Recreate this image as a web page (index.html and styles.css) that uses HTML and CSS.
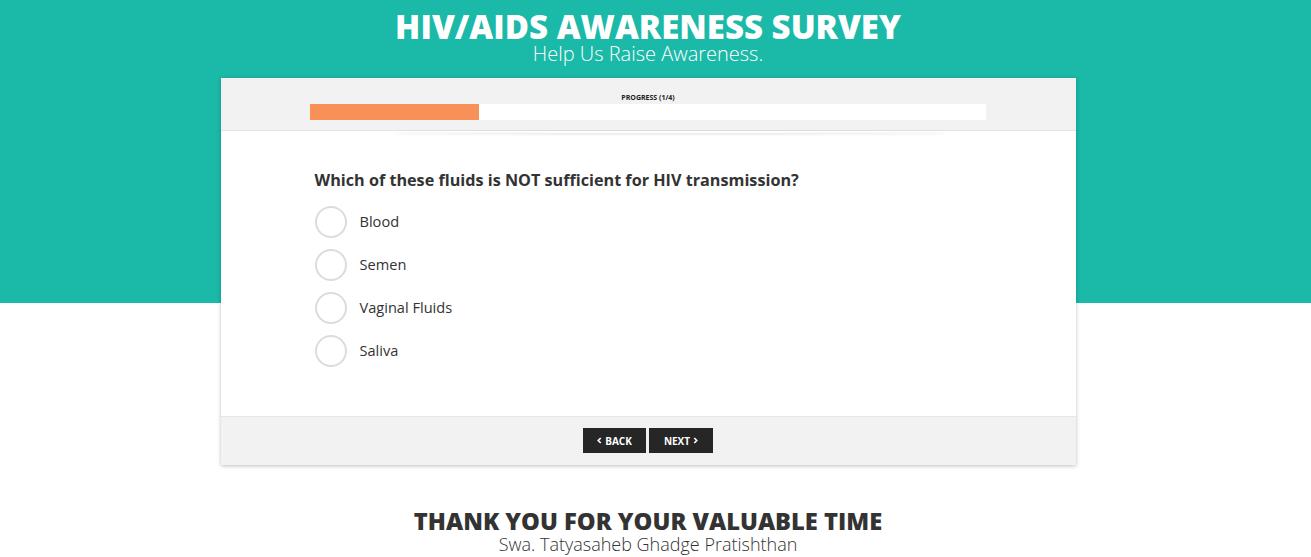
FILE: index.html
```html
<!DOCTYPE html>
<html lang="en">
<head>
    <meta charset="UTF-8">
    <meta name="viewport" content="width=device-width, initial-scale=1.0">
    <title>HIV/AIDS Awareness Survey</title>
    <link rel="stylesheet" href="styles.css">
</head>
<body>
    <header class="page-header">
        <h1 class="title">HIV/AIDS AWARENESS SURVEY</h1>
        <p class="subtitle">Help Us Raise Awareness.</p>
    </header>

    <main class="survey-card">
        <div class="progress-area">
            <div class="progress-label">PROGRESS (1/4)</div>
            <div class="progress-track">
                <div class="progress-fill" style="width: 25%"></div>
            </div>
        </div>

        <div class="question-area">
            <h2 class="question">Which of these fluids is NOT sufficient for HIV transmission?</h2>
            <ul class="options">
                <li class="option"><span class="radio"></span><span class="option-text">Blood</span></li>
                <li class="option"><span class="radio"></span><span class="option-text">Semen</span></li>
                <li class="option"><span class="radio"></span><span class="option-text">Vaginal Fluids</span></li>
                <li class="option"><span class="radio"></span><span class="option-text">Saliva</span></li>
            </ul>
        </div>

        <div class="nav-area">
            <button class="nav-button" id="backButton">
                <svg class="chev" viewBox="0 0 6 8"><polyline points="4.5,1 1.5,4 4.5,7"/></svg>BACK
            </button>
            <button class="nav-button" id="nextButton">
                NEXT<svg class="chev" viewBox="0 0 6 8"><polyline points="1.5,1 4.5,4 1.5,7"/></svg>
            </button>
        </div>
    </main>

    <footer class="page-footer">
        <h3 class="thanks">THANK YOU FOR YOUR VALUABLE TIME</h3>
        <p class="org">Swa. Tatyasaheb Ghadge Pratishthan</p>
    </footer>
</body>
</html>
```

FILE: styles.css
```css
:root {
    --teal: #1bb9a7;
    --orange: #f89157;
    --panel: #f2f2f2;
    --dark: #262626;
    --text: #333333;
}

* {
    margin: 0;
    padding: 0;
    box-sizing: border-box;
    font-family: 'Open Sans', 'Liberation Sans', sans-serif;
}

body {
    background: linear-gradient(var(--teal) 303px, #ffffff 303px);
    color: var(--text);
    min-height: 100vh;
    padding-right: 15px;
}

.page-header {
    text-align: center;
    color: #ffffff;
    padding-top: 10px;
    height: 78px;
}

.title {
    font-size: 33px;
    font-weight: 800;
    line-height: 34px;
}

.subtitle {
    font-size: 20px;
    font-weight: 300;
    line-height: 20px;
}

.survey-card {
    width: 855px;
    margin: 0 auto;
    background: #ffffff;
    box-shadow: 0 1px 4px rgba(0, 0, 0, 0.25);
}

.progress-area {
    background: var(--panel);
    height: 53px;
    padding-top: 15px;
    border-bottom: 1px solid #e2e2e2;
    text-align: center;
    position: relative;
}

.progress-area::after {
    content: '';
    position: absolute;
    left: 20%;
    right: 15%;
    bottom: -3px;
    height: 2px;
    border-radius: 50%;
    box-shadow: 0 1px 3px rgba(0, 0, 0, 0.15);
}

.progress-label {
    font-size: 7px;
    font-weight: 700;
    color: #222222;
    line-height: 10px;
}

.progress-track {
    width: 676px;
    height: 16px;
    margin: 1px auto 0;
    background: #ffffff;
}

.progress-fill {
    height: 100%;
    background: var(--orange);
}

.question-area {
    padding: 38px 94px 33px;
    height: 285px;
}

.question {
    font-size: 16.2px;
    font-weight: 700;
    line-height: 22px;
    color: var(--text);
    margin-bottom: 15px;
}

.options {
    list-style: none;
    display: flex;
    flex-direction: column;
    gap: 11px;
}

.option {
    display: flex;
    align-items: center;
    gap: 13px;
    cursor: pointer;
}

.radio {
    width: 32px;
    height: 32px;
    border-radius: 50%;
    border: 2px solid #dcdcdc;
    background: #ffffff;
}

.option-text {
    font-size: 14.6px;
    color: var(--text);
    margin-top: -2px;
}

.nav-area {
    background: var(--panel);
    border-top: 1px solid #e6e6e6;
    height: 49px;
    display: flex;
    justify-content: center;
    align-items: center;
    gap: 3px;
    padding-bottom: 1px;
}

.nav-button {
    display: flex;
    align-items: center;
    justify-content: center;
    gap: 3px;
    background: var(--dark);
    color: #ffffff;
    border: none;
    height: 25px;
    width: 63px;
    font-size: 10px;
    font-weight: 700;
    cursor: pointer;
}

#nextButton {
    width: 64px;
}

.chev {
    width: 5px;
    height: 7px;
    fill: none;
    stroke: #ffffff;
    stroke-width: 2;
}

.page-footer {
    text-align: center;
    padding-top: 44px;
}

.thanks {
    font-size: 23.7px;
    font-weight: 800;
    line-height: 24px;
    color: var(--text);
}

.org {
    font-size: 18px;
    font-weight: 300;
    line-height: 22px;
    color: var(--text);
}
```
